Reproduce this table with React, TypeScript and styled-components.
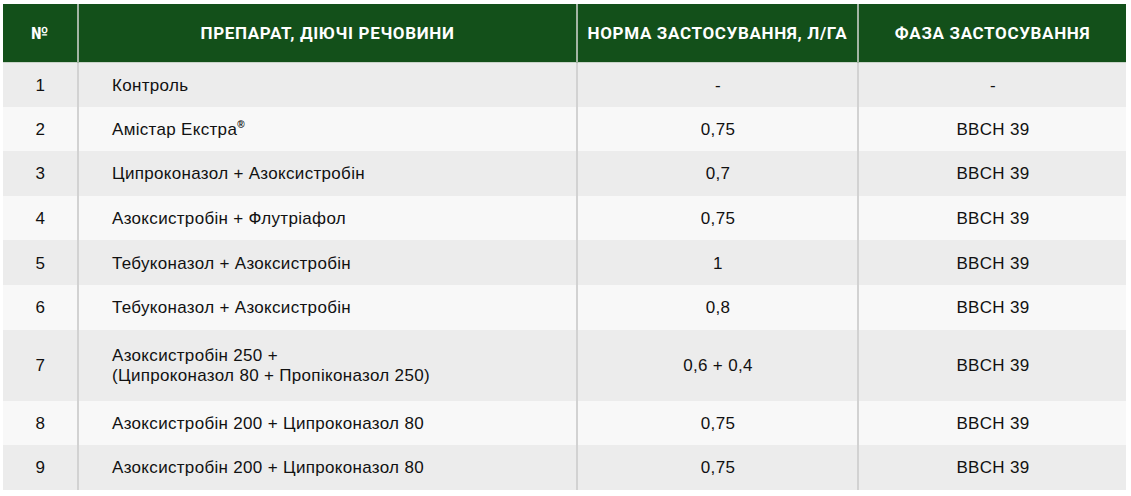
import React from "react";
import styled, { createGlobalStyle } from "styled-components";

const Global = createGlobalStyle`
  html, body { margin: 0; padding: 0; background: #ffffff; }
  body { font-family: "Liberation Sans", Arial, sans-serif; }
`;

const Wrap = styled.div`
  padding: 4px 5px 0 3px;
`;

const Table = styled.table`
  width: 1123px;
  border-collapse: collapse;
  table-layout: fixed;
`;

const HeadCell = styled.th<{ $w: number; $first?: boolean }>`
  width: ${(p) => p.$w}px;
  height: 58px;
  padding: 0 4px;
  box-sizing: border-box;
  background: #13501a;
  color: #ffffff;
  font-family: Roboto, "Liberation Sans", sans-serif;
  font-weight: 700;
  font-size: 17px;
  letter-spacing: 0.65px;
  text-transform: uppercase;
  text-align: center;
  vertical-align: middle;
  border-left: ${(p) => (p.$first ? "none" : "2px solid #a3b5a4")};
  border-bottom: 1px solid #c9d3c9;
`;

const Row = styled.tr<{ $alt: boolean; $tall?: boolean }>`
  background: ${(p) => (p.$alt ? "#f8f8f8" : "#ececec")};
  height: ${(p) => (p.$tall ? 71 : 44.6)}px;
`;

const Cell = styled.td<{ $align?: "left" | "center"; $first?: boolean }>`
  padding: ${(p) => (p.$align === "left" ? "2px 8px 0 33px" : "2px 4px 0 5px")};
  box-sizing: border-box;
  font-size: 17px;
  letter-spacing: 0.32px;
  line-height: 20px;
  color: #111111;
  text-align: ${(p) => p.$align ?? "center"};
  vertical-align: middle;
  border-left: ${(p) => (p.$first ? "none" : "2px solid #d2d2d2")};
`;

const Sup = styled.sup`
  font-size: 10px;
  vertical-align: 7px;
  line-height: 0;
  font-weight: 700;
`;

type R = { n: number; name: React.ReactNode; rate: string; phase: string; tall?: boolean };

const rows: R[] = [
  { n: 1, name: "Контроль", rate: "-", phase: "-" },
  { n: 2, name: <>Амістар Екстра<Sup>®</Sup></>, rate: "0,75", phase: "BBCH 39" },
  { n: 3, name: "Ципроконазол + Азоксистробін", rate: "0,7", phase: "BBCH 39" },
  { n: 4, name: "Азоксистробін + Флутріафол", rate: "0,75", phase: "BBCH 39" },
  { n: 5, name: "Тебуконазол + Азоксистробін", rate: "1", phase: "BBCH 39" },
  { n: 6, name: "Тебуконазол + Азоксистробін", rate: "0,8", phase: "BBCH 39" },
  {
    n: 7,
    name: (
      <>
        Азоксистробін 250 +
        <br />
        (Ципроконазол 80 + Пропіконазол 250)
      </>
    ),
    rate: "0,6 + 0,4",
    phase: "BBCH 39",
    tall: true,
  },
  { n: 8, name: "Азоксистробін 200 + Ципроконазол 80", rate: "0,75", phase: "BBCH 39" },
  { n: 9, name: "Азоксистробін 200 + Ципроконазол 80", rate: "0,75", phase: "BBCH 39" },
];

export default function App() {
  return (
    <>
      <Global />
      <Wrap>
        <Table>
          <thead>
            <tr>
              <HeadCell $w={75} $first>№</HeadCell>
              <HeadCell $w={499}>Препарат, діючі речовини</HeadCell>
              <HeadCell $w={281}>Норма застосування, л/га</HeadCell>
              <HeadCell $w={268}>Фаза застосування</HeadCell>
            </tr>
          </thead>
          <tbody>
            {rows.map((r, i) => (
              <Row key={r.n} $alt={i % 2 === 1} $tall={r.tall}>
                <Cell $first>{r.n}</Cell>
                <Cell $align="left">{r.name}</Cell>
                <Cell>{r.rate}</Cell>
                <Cell>{r.phase}</Cell>
              </Row>
            ))}
          </tbody>
        </Table>
      </Wrap>
    </>
  );
}
